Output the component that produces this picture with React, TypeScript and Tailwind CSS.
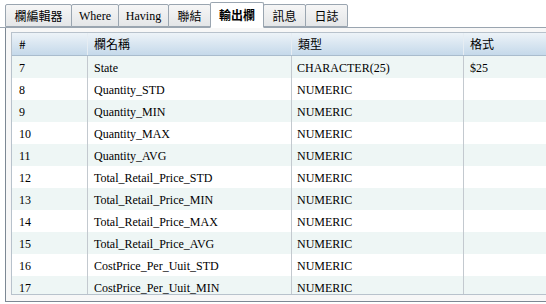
const tabs: { label: string; w: string }[] = [
  { label: "欄編輯器", w: "w-[67px]" },
  { label: "Where", w: "w-[48px]" },
  { label: "Having", w: "w-[51px]" },
  { label: "聯結", w: "w-[43px]" },
  { label: "輸出欄", w: "w-[54px]" },
  { label: "訊息", w: "w-[43px]" },
  { label: "日誌", w: "w-[43px]" },
];

const rows: [string, string, string, string][] = [
  ["7", "State", "CHARACTER(25)", "$25"],
  ["8", "Quantity_STD", "NUMERIC", ""],
  ["9", "Quantity_MIN", "NUMERIC", ""],
  ["10", "Quantity_MAX", "NUMERIC", ""],
  ["11", "Quantity_AVG", "NUMERIC", ""],
  ["12", "Total_Retail_Price_STD", "NUMERIC", ""],
  ["13", "Total_Retail_Price_MIN", "NUMERIC", ""],
  ["14", "Total_Retail_Price_MAX", "NUMERIC", ""],
  ["15", "Total_Retail_Price_AVG", "NUMERIC", ""],
  ["16", "CostPrice_Per_Uuit_STD", "NUMERIC", ""],
  ["17", "CostPrice_Per_Uuit_MIN", "NUMERIC", ""],
];

const cjk = "font-['Noto_Sans_CJK_TC','Noto_Sans',sans-serif]";
const serif = "font-['Liberation_Serif','Noto_Sans_CJK_TC',serif]";

function Tab({ label, w, active }: { label: string; w: string; active: boolean }) {
  const isLatin = /^[A-Za-z]+$/.test(label);
  return (
    <div
      className={`flex items-center justify-center ${w} border border-[#9aa5b0] -ml-px first:ml-0 rounded-t-[2px] text-[12px] text-black leading-none ${
        isLatin ? serif : cjk
      } ${
        active
          ? "h-[26px] bg-white font-bold border-b-white relative z-10 -mb-px"
          : "h-[23px] bg-gradient-to-b from-[#f6f6f6] to-[#e4e6e8]"
      }`}
    >
      {label}
    </div>
  );
}

export default function App() {
  return (
    <div className="w-[546px] h-[304px] overflow-hidden bg-white">
      <div className="flex items-end pl-[5px] pt-[2px] border-b border-[#9aa5b0] h-[28px]">
        {tabs.map((t) => (
          <Tab key={t.label} label={t.label} w={t.w} active={t.label === "輸出欄"} />
        ))}
      </div>
      <div className="ml-[5px] w-[560px] h-[274px] border-l border-b border-[#7d8894] bg-[#f7f7f7] pl-[5px] pt-[4px]">
        <div className="h-[263px] overflow-hidden border border-[#b8c2cc] bg-white">
          <div
            className={`flex h-[23px] items-center bg-gradient-to-b from-[#edf3f8] to-[#c5d9ea] border-b border-[#a9bccd] text-[12px] text-black ${cjk}`}
          >
            <div className="w-[76px] pl-[7px] h-full flex items-center border-r border-[#e6edf3]">#</div>
            <div className="w-[204px] pl-[6px] h-full flex items-center border-r border-[#e6edf3]">欄名稱</div>
            <div className="w-[172px] pl-[6px] h-full flex items-center border-r border-[#e6edf3]">類型</div>
            <div className="flex-1 pl-[6px] h-full flex items-center">格式</div>
          </div>
          {rows.map((r, i) => (
            <div
              key={r[0]}
              className={`flex h-[22px] items-center text-[12px] text-black ${serif} ${
                i % 2 === 0 ? "bg-[#eef6f5]" : "bg-white"
              }`}
            >
              <div className="w-[76px] pl-[7px] pt-[2px] h-full flex items-center border-r border-[#c3c9cf]">{r[0]}</div>
              <div className="w-[204px] pl-[6px] pt-[2px] h-full flex items-center border-r border-[#c3c9cf]">{r[1]}</div>
              <div className="w-[172px] pl-[5px] pt-[2px] h-full flex items-center border-r border-[#c3c9cf]">{r[2]}</div>
              <div className="flex-1 pl-[6px] pt-[2px] h-full flex items-center">{r[3]}</div>
            </div>
          ))}
        </div>
      </div>
    </div>
  );
}
